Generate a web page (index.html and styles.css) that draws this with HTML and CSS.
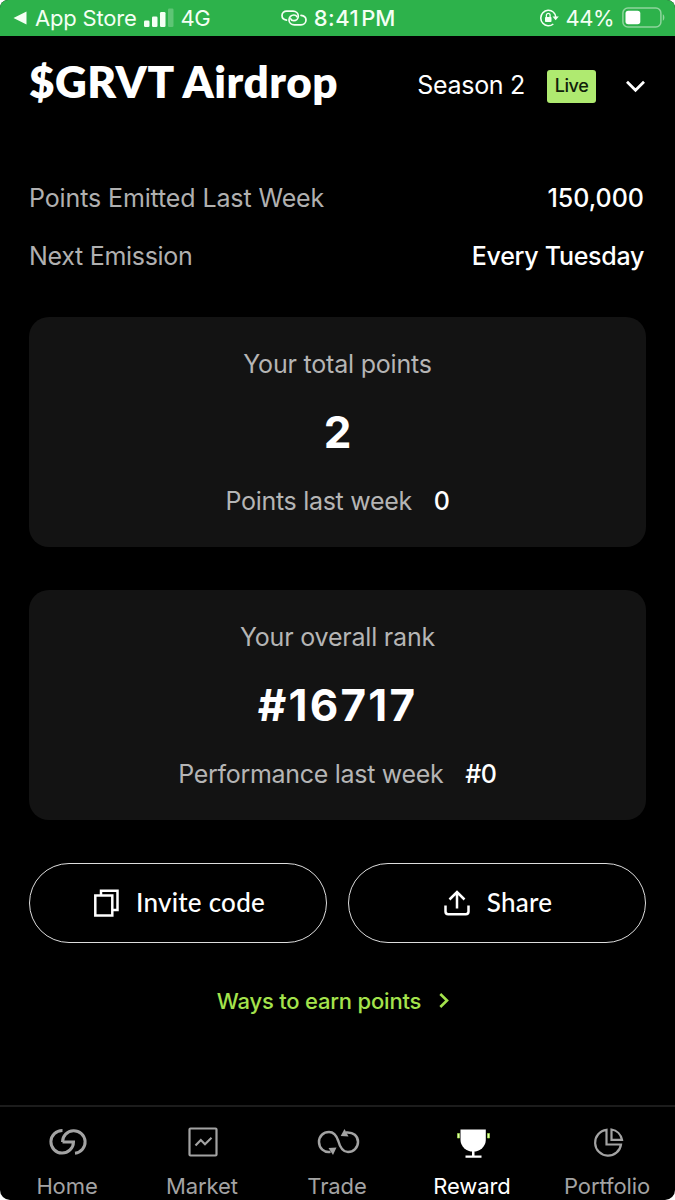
FILE: index.html
```html
<!DOCTYPE html>
<html lang="en">

<head>
  <meta charset="UTF-8" />
  <title>$GRVT Airdrop</title>
  <link rel="stylesheet" href="styles.css">
</head>

<body>
  <div class="app">

    <div class="status-bar">
      <div class="status-left">
        <svg class="back-icon" width="14" height="14" viewBox="0 0 14 14"><path d="M13.5 0.5V13.5L0.5 7Z" fill="#f4fff4" /></svg>
        <span class="back-app">App Store</span>
        <svg class="signal-icon" width="30" height="20" viewBox="0 0 30 20" fill="#f4fff4">
          <rect x="0" y="12.500" width="5.500" height="6.500" rx="1.300" />
          <rect x="8" y="8.500" width="5.500" height="10.500" rx="1.300" />
          <rect x="16" y="4" width="5.500" height="15" rx="1.300" />
          <rect x="24" y="0.500" width="5.500" height="18.500" rx="1.300" opacity="0.250" />
        </svg>
        <span class="network">4G</span>
      </div>
      <div class="status-center">
        <svg width="26" height="16" viewBox="0 0 26 16" fill="none" stroke="#f4fff4" stroke-width="1.700" stroke-linecap="round">
          <path d="M5.500 10.200C2.800 9.800 1 8 1 5.600C1 3 3 1.200 5.700 1.200H12C15 1.200 17.300 3.200 17.300 6C17.300 8.800 15.200 10.700 12.800 10.700C11 10.700 10 9.800 9.700 8.800" />
          <path d="M20 5.300C23 5.600 25 7.600 25 10C25 12.800 22.800 14.800 20 14.800H13.500C10.300 14.800 8 12.800 8 10C8 7.200 10.200 5 12.800 5C14.500 5 15.500 5.700 15.900 6.700" />
        </svg>
        <span class="clock">8:41</span><span class="clock-pm">PM</span>
      </div>
      <div class="status-right">
        <svg width="20" height="18" viewBox="0 0 20 18" fill="none">
          <path d="M14.300 3A7.700 7.700 0 1 0 14.300 15" stroke="#f4fff4" stroke-width="1.600" />
          <path d="M14.300 3A7.700 7.700 0 0 1 16.700 8" stroke="#f4fff4" stroke-width="1.600" />
          <path d="M13.500 7.500H19.800L16.600 11.300Z" fill="#f4fff4" />
          <rect x="6" y="8" width="6.500" height="5" rx="0.800" fill="#f4fff4" />
          <path d="M7.400 8V6.300A1.850 1.850 0 0 1 11.100 6.300V8" stroke="#f4fff4" stroke-width="1.300" />
        </svg>
        <span class="battery-text">44%</span>
        <svg width="43" height="22" viewBox="0 0 43 22">
          <rect x="0.900" y="1" width="38" height="19" rx="5" fill="none" stroke="#8fd59d" stroke-width="1.500" />
          <rect x="3.500" y="3.700" width="14.800" height="13.600" rx="2.800" fill="#fff" />
          <path d="M40.800 7.200C42.900 8.300 42.900 12.700 40.800 13.800Z" fill="#8fd59d" />
        </svg>
      </div>
    </div>

    <div class="content">
      <div class="header">
        <h1 class="title">$GRVT Airdrop</h1>
        <div class="season">
          <span class="season-name">Season 2</span>
          <span class="badge">Live</span>
          <svg width="20" height="13" viewBox="0 0 20 13" fill="none" stroke="#fff" stroke-width="2.800"><path d="M1 1.800L9.500 10.200L18 1.800" /></svg>
        </div>
      </div>

      <div class="emission">
        <div class="row"><span class="label">Points Emitted Last Week</span><span class="value value-number">150,000</span></div>
        <div class="row"><span class="label label-next">Next Emission</span><span class="value">Every Tuesday</span></div>
      </div>

      <div class="card">
        <div class="card-label">Your total points</div>
        <div class="card-value">2</div>
        <div class="card-footer">Points last week <span class="card-count">0</span></div>
      </div>

      <div class="card">
        <div class="card-label">Your overall rank</div>
        <div class="card-value card-rank">#16717</div>
        <div class="card-footer">Performance last week <span class="card-count">#0</span></div>
      </div>

      <div class="actions">
        <button class="button">
          <svg class="invite-icon" width="26" height="28" viewBox="0 0 26 28" fill="none" stroke="#fff" stroke-width="2.500">
            <rect x="2.300" y="6.500" width="17" height="20" />
            <path d="M8 6V1.800H24.500V21H20" />
          </svg>
          <span class="button-text">Invite code</span>
        </button>
        <button class="button">
          <svg class="share-icon" width="26" height="26" viewBox="0 0 26 26" fill="none" stroke="#fff" stroke-width="2.500">
            <path d="M1.500 15.500V21.500Q1.500 24.200 4.200 24.200H21.800Q24.500 24.200 24.500 21.500V15.500" />
            <path d="M13 18.500V2M5.500 9.500L13 2L20.500 9.500" />
          </svg>
          <span class="button-text">Share</span>
        </button>
      </div>

      <div class="earn-link">
        Ways to earn points
        <svg class="earn-icon" width="10" height="15" viewBox="0 0 10 15" fill="none" stroke="#a4e34c" stroke-width="2.600"><path d="M1.300 1L8 7.500L1.300 14" /></svg>
      </div>
    </div>

    <div class="tab-bar">
      <div class="tab">
        <svg class="tab-icon" width="40" height="34" viewBox="0 0 40 34" fill="none" stroke="#a3a3a3" stroke-width="3">
          <path d="M14.500 5.500A11.300 11.300 0 1 0 25.500 17H14.500" />
          <path d="M14.500 17A11.300 11.300 0 1 1 27 28.200" />
        </svg>
        <span class="tab-name">Home</span>
      </div>
      <div class="tab">
        <svg class="tab-icon" width="40" height="34" viewBox="0 0 40 34" fill="none" stroke="#a3a3a3" stroke-width="2.200">
          <rect x="6.500" y="3.500" width="27" height="27" rx="1" />
          <path d="M12.500 20.500L17.800 15L22 19.200L28.500 12.800" />
        </svg>
        <span class="tab-name">Market</span>
      </div>
      <div class="tab">
        <svg class="tab-icon" width="44" height="34" viewBox="0 0 44 34" fill="none" stroke="#a3a3a3" stroke-width="2.500">
          <path d="M14.500 26.800C8 28 3 23 3 17C3 11 7.500 7 13 7C18 7 20.500 10.500 22.300 16C24 22.500 26.500 27 32 27C37.500 27 42 22.500 42 17C42 11 37.500 6.800 30 7.500" />
          <path d="M12.500 23L20.500 22.500L17 30Z" fill="#a3a3a3" stroke="none" />
          <path d="M28.500 4L24.700 11L32.500 11.500Z" fill="#a3a3a3" stroke="none" />
        </svg>
        <span class="tab-name">Trade</span>
      </div>
      <div class="tab active">
        <svg class="tab-icon" width="40" height="34" viewBox="0 0 40 34">
          <path d="M7.500 4.500H32.800V15A12.650 11.500 0 0 1 7.500 15Z" fill="#fff" />
          <path d="M19 25H21.500V30.500H28.500V32.800H12.500V30.500H19Z" fill="#fff" />
          <path d="M4.500 8.500H6.500V13H4.500ZM34.500 8.500H36.500V13H34.500Z" fill="#e2ffad" stroke="#a4e34c" stroke-width="0.700" />
        </svg>
        <span class="tab-name">Reward</span>
      </div>
      <div class="tab">
        <svg class="tab-icon" width="40" height="34" viewBox="0 0 40 34" fill="none" stroke="#a3a3a3" stroke-width="2.200">
          <path d="M18.500 4.800A13 13 0 1 0 33 19.500H18.500Z" />
          <path d="M23.500 4.500A13 13 0 0 1 34 14.800H23.500Z" />
        </svg>
        <span class="tab-name">Portfolio</span>
      </div>
    </div>

  </div>
</body>

</html>
```
FILE: styles.css
```css
body {
  margin: 0;
  background: #fff;
  font-family: Inter, sans-serif;
}

svg {
  display: block;
  flex-shrink: 0;
}

.app {
  display: flex;
  flex-direction: column;
  height: 1200px;
  background: #000;
  color: #fff;
  border-radius: 8px 8px 10px 10px;
  overflow: hidden;
}

.status-bar {
  display: grid;
  grid-template-columns: 1fr auto 1fr;
  align-items: center;
  height: 36px;
  box-sizing: border-box;
  padding: 0 10px 0 13px;
  background: #2db24b;
  color: #f4fff4;
  font-size: 22px;
  line-height: 34px;
}

.status-left,
.status-center,
.status-right {
  display: flex;
  align-items: center;
}

.status-center {
  padding-right: 2px;
}

.status-right {
  justify-content: flex-end;
}

.back-app {
  margin-left: 8px;
  letter-spacing: -0.2px;
}

.signal-icon {
  margin: 0 7px;
}

.network {
  letter-spacing: -0.5px;
}

.clock {
  margin-left: 7px;
  font-weight: 500;
  letter-spacing: 0.5px;
}

.clock-pm {
  margin-left: 2px;
  font-weight: 500;
}

.battery-text {
  margin: 0 8px 0 6px;
  letter-spacing: -0.5px;
}

.content {
  flex: 1;
  padding: 0 29px;
}

.header {
  display: flex;
  justify-content: space-between;
  align-items: center;
  height: 100px;
}

.title {
  margin: -10px 0 0;
  font-family: Lato, sans-serif;
  font-size: 44px;
  font-weight: 800;
  letter-spacing: 0.5px;
}

.season {
  display: flex;
  align-items: center;
}

.season-name {
  font-size: 25px;
  line-height: 34px;
  margin-top: -2px;
  letter-spacing: -0.3px;
}

.badge {
  margin: 0 30px 0 22px;
  width: 49px;
  height: 33px;
  border-radius: 3px;
  background: #afea70;
  color: #10200a;
  font-size: 18px;
  font-weight: 500;
  letter-spacing: -0.4px;
  line-height: 32px;
  text-align: center;
}

.emission {
  padding-top: 33px;
}

.row {
  display: flex;
  justify-content: space-between;
  align-items: center;
  height: 58px;
  padding-right: 2px;
  font-size: 25px;
}

.label {
  color: #b0b0b0;
  letter-spacing: -0.12px;
}

.label-next {
  letter-spacing: -0.3px;
}

.value {
  font-weight: 500;
  letter-spacing: -0.3px;
}

.value-number {
  letter-spacing: 0;
}

.card {
  display: flex;
  flex-direction: column;
  align-items: center;
  height: 230px;
  box-sizing: border-box;
  margin-top: 32px;
  padding-top: 30px;
  border-radius: 20px;
  background: #131313;
}

.card + .card {
  margin-top: 43px;
}

.card-label,
.card-footer {
  color: #b5b5b5;
  font-size: 25px;
  line-height: 34px;
  letter-spacing: -0.3px;
}

.card-label {
  letter-spacing: -0.2px;
}

.card-value {
  margin: 24px 0 25px;
  font-size: 44px;
  line-height: 54px;
  font-weight: 700;
}

.card-rank {
  letter-spacing: 2.2px;
}

.card-count {
  margin-left: 15px;
  color: #fff;
  font-weight: 500;
}

.actions {
  display: grid;
  grid-template-columns: 1fr 1fr;
  gap: 21px;
  margin-top: 43px;
}

.button {
  display: flex;
  justify-content: center;
  align-items: center;
  gap: 17px;
  height: 80px;
  padding: 0 0 0 2px;
  border: 1px solid #ddd;
  border-radius: 40px;
  background: transparent;
  color: #fff;
  font-family: Lato, sans-serif;
  font-size: 26px;
  font-weight: 500;
  letter-spacing: 0.25px;
}

.button-text {
  margin-top: -2px;
}

.earn-link {
  display: flex;
  justify-content: center;
  align-items: center;
  gap: 18px;
  margin-top: 43px;
  padding-right: 9px;
  color: #a4e34c;
  font-size: 22px;
  line-height: 30px;
  font-weight: 500;
  letter-spacing: -0.2px;
}

.earn-icon {
  margin-top: -2px;
}

.tab-bar {
  display: grid;
  grid-template-columns: repeat(5, 1fr);
  height: 95px;
  box-sizing: border-box;
  border-top: 2px solid #1c1c1c;
}

.tab {
  display: flex;
  flex-direction: column;
  align-items: center;
  padding: 18px 1px 0 0;
  color: #a3a3a3;
  font-size: 22px;
}

.tab-icon {
  margin-left: 2px;
}

.tab-name {
  margin-top: 13px;
  line-height: 28px;
  letter-spacing: -0.1px;
}

.active {
  color: #fff;
}
```
